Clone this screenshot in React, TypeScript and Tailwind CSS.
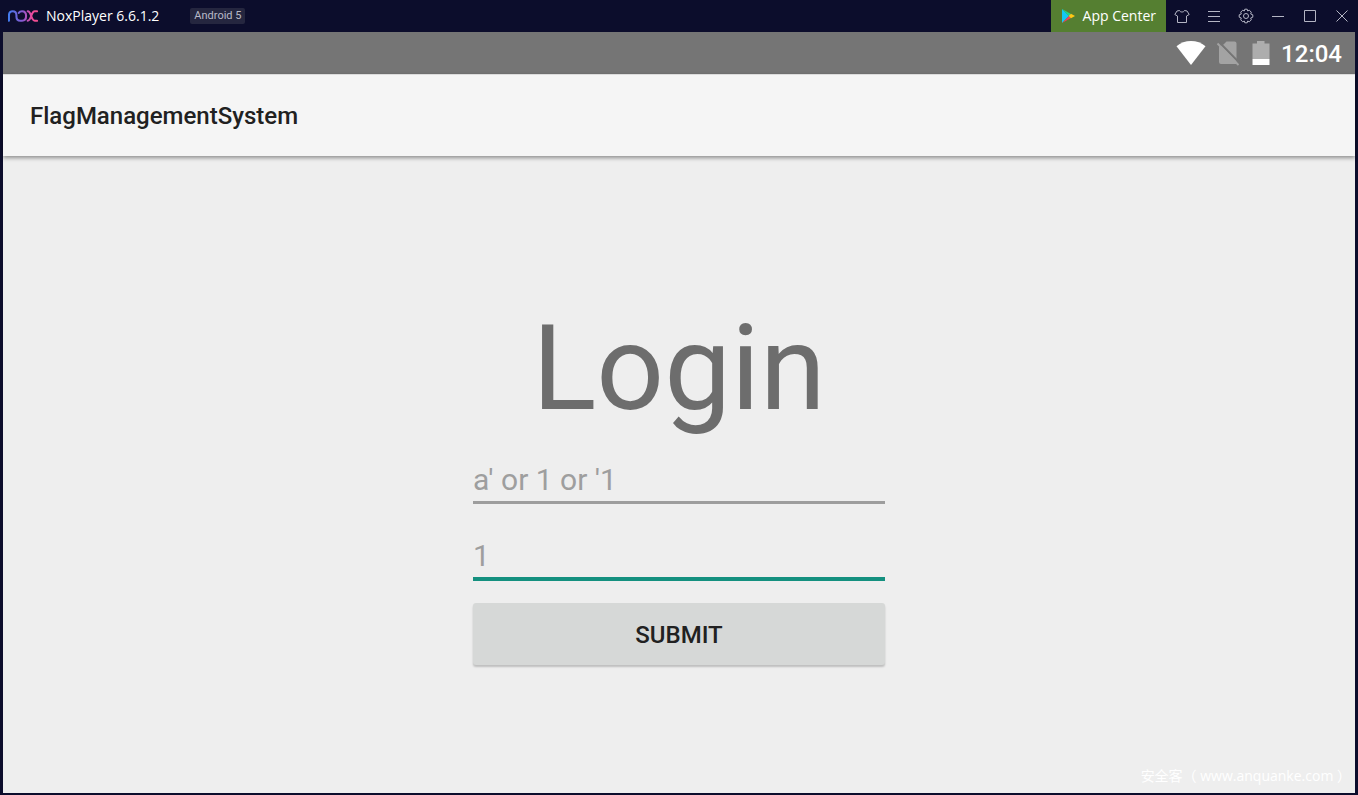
import type { ReactNode } from "react"

interface WindowButtonProps {
  label: string
  children: ReactNode
}

function WindowButton({ label, children }: WindowButtonProps) {
  return (
    <button
      type="button"
      aria-label={label}
      className="w-8 h-8 flex items-center justify-center text-[#b4b5c4] hover:bg-white/10"
    >
      <svg
        viewBox="0 0 16 16"
        className="w-4 h-4"
        fill="none"
        stroke="currentColor"
        strokeWidth="1"
      >
        {children}
      </svg>
    </button>
  )
}

function NoxLogo() {
  return (
    <svg
      viewBox="0 0 32 12"
      className="w-[30px] h-3"
      fill="none"
      strokeWidth="2.2"
      strokeLinecap="round"
    >
      <defs>
        <linearGradient id="nox" gradientUnits="userSpaceOnUse" x1="0" y1="0" x2="32" y2="0">
          <stop offset="0" stopColor="#3f7df0" />
          <stop offset="0.5" stopColor="#8a58d0" />
          <stop offset="0.8" stopColor="#ee4a9c" />
          <stop offset="1" stopColor="#f0508a" />
        </linearGradient>
      </defs>
      <g stroke="url(#nox)">
        <path d="M1 11V5.5C1 2.8 2.6 1 5 1S9 2.8 9 5.5V6.5C9 9.2 10.7 11 13.2 11H15C17.7 11 19.3 8.8 19.3 6S17.7 1 15 1C13.4 1 12.2 1.6 11.5 2.6" />
        <path d="M21 1C25 1 24.5 11 28.5 11H31M21 11C25 11 24.5 1 28.5 1H31" />
      </g>
    </svg>
  )
}

function PlayIcon() {
  return (
    <svg viewBox="0 0 14 14" className="w-3.5 h-3.5">
      <path d="M1 0L8 7L1 14Z" fill="#12c8f5" />
      <path d="M1 0L10 5L8 7Z" fill="#1fd68a" />
      <path d="M1 14L10 9L8 7Z" fill="#f2405a" />
      <path d="M10 4.7L14 7L10 9.3L7.7 7Z" fill="#ffc814" />
    </svg>
  )
}

function TitleBar() {
  return (
    <header className="h-8 flex items-center justify-between text-white font-['Open_Sans',sans-serif]">
      <div className="flex items-center pl-[5px]">
        <NoxLogo />
        <span className="pl-2 text-sm">NoxPlayer 6.6.1.2</span>
        <span className="ml-[31px] px-1 h-4 rounded-xs bg-[#25263f] text-[11px] leading-4 text-[#b9bac8] font-[Roboto,sans-serif]">
          Android 5
        </span>
      </div>
      <div className="flex items-center -mr-[3px]">
        <button
          type="button"
          className="h-8 px-2.5 flex items-center gap-2 bg-[#557f31] text-sm"
        >
          <PlayIcon />
          <span>App Center</span>
        </button>
        <WindowButton label="Theme">
          <path d="M5.5 2.5C6 4.5 10 4.5 10.5 2.5L13 3L15.2 6.5L12.5 8V14.5H3.5V8L0.8 6.5L3 3Z" />
        </WindowButton>
        <WindowButton label="Menu">
          <path d="M2 3.5H14M2 8.5H14M2 13.5H14" />
        </WindowButton>
        <WindowButton label="Settings">
          <circle cx="8" cy="8" r="2.5" />
          <path d="M6.8 1.2H9.2L9.7 3L11.3 2.2L13.3 4.2L12.700 6L14.8 6.8V9.2L12.700 10L13.3 11.800L11.3 13.8L9.7 13L9.2 14.8H6.8L6.3 13L4.700 13.8L2.7 11.800L3.3 10L1.2 9.2V6.8L3.3 6L2.7 4.2L4.700 2.2L6.3 3Z" />
        </WindowButton>
        <WindowButton label="Minimize">
          <path d="M2 8.5H14" />
        </WindowButton>
        <WindowButton label="Maximize">
          <path d="M2.5 2.5H13.5V13.5H2.5Z" />
        </WindowButton>
        <WindowButton label="Close">
          <path d="M2.5 2.5L13.5 13.5M13.5 2.5L2.5 13.5" />
        </WindowButton>
      </div>
    </header>
  )
}

function StatusBar() {
  return (
    <div className="h-[42px] pr-[13px] flex items-center justify-end bg-[#757575] text-white">
      <svg viewBox="0 0 30 24" className="w-[30px] h-6" fill="currentColor">
        <path d="M15 24L0.5 5.2C4.5 1.8 9.5 0 15 0S25.5 1.8 29.5 5.2Z" />
      </svg>
      {/* No SIM card */}
      <svg viewBox="0 0 24 26" className="w-6 h-[26px] ml-2.5">
        <path
          d="M10.5 1.5H18.5A2 2 0 0 1 20.5 3.5V24H5A2 2 0 0 1 3 22V6.500L7.5 4.5Z"
          fill="#a3a3a3"
        />
        <path d="M3.5 2.500L24 23.5" stroke="#757575" strokeWidth="2" />
        <path d="M1.5 3.5L22.5 25" stroke="#a3a3a3" strokeWidth="1.8" />
      </svg>
      <svg viewBox="0 0 18 26" className="w-[18px] h-[26px] ml-3">
        <path d="M5 1H12.5V3.5H17.5V19H0.5V3.5H5Z" fill="#adadad" />
        <path d="M0.5 19H17.5V25H0.5Z" fill="#fff" />
      </svg>
      <span className="ml-[11px] pt-0.5 text-2xl font-medium">12:04</span>
    </div>
  )
}

function LoginForm() {
  return (
    <form
      className="w-[412px] flex flex-col"
      onSubmit={(event) => event.preventDefault()}
    >
      <h2 className="text-center text-[119px] leading-[140px] text-[#6d6d6d]">
        Login
      </h2>
      <input
        type="text"
        aria-label="Username"
        placeholder="a' or 1 or '1"
        className="mt-[22px] h-[43px] pb-1 border-b-3 border-[#9d9d9d] text-[30px] leading-9 text-[#212121] placeholder:text-[#9e9e9e] outline-none"
      />
      <input
        type="text"
        aria-label="Password"
        placeholder="1"
        className="mt-[33px] h-11 pb-1 border-b-4 border-[#14907f] text-[30px] leading-9 text-[#212121] placeholder:text-[#9e9e9e] outline-none"
      />
      <button
        type="submit"
        className="mt-[22px] h-[62px] pt-0.5 rounded-[3px] bg-[#d6d8d7] text-2xl font-medium text-[#212121] shadow-[0_2px_2px_rgba(0,0,0,0.2)]"
      >
        SUBMIT
      </button>
    </form>
  )
}

export default function App() {
  return (
    <div className="min-h-screen flex flex-col px-[3px] pb-0.5 bg-[#0c0d2c] font-[Roboto,sans-serif]">
      <TitleBar />
      <StatusBar />
      <div className="relative z-10 h-[82px] px-[27px] flex items-center bg-[#f5f5f5] border-t border-[#dcdcdc] shadow-[0_2px_4px_rgba(0,0,0,0.4)]">
        <h1 className="text-2xl font-medium text-[#212121]">
          FlagManagementSystem
        </h1>
      </div>
      <main className="relative flex-1 pt-[15px] flex items-center justify-center bg-[#eeeeee]">
        <LoginForm />
        <p className="absolute right-1 bottom-[7px] text-sm text-white font-['Open_Sans','Noto_Sans_CJK_SC',sans-serif]">
          安全客（ www.anquanke.com ）
        </p>
      </main>
    </div>
  )
}
